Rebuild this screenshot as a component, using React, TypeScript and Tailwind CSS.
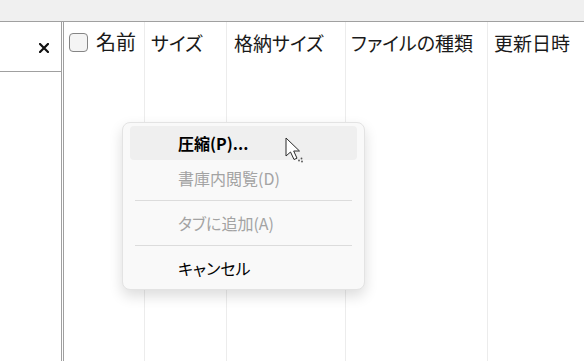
import React from "react";

const font = "font-['Segoe_UI','Noto_Sans_CJK_JP',sans-serif] [font-feature-settings:'palt']";

function Col({ w, children, last }: { w: string; children?: React.ReactNode; last?: boolean }) {
  return (
    <div className={`${w} h-full shrink-0 ${last ? "" : "border-r border-[#ececec]"} flex items-start`}>
      {children}
    </div>
  );
}

export default function App() {
  return (
    <div className={`relative w-[584px] h-[361px] overflow-hidden bg-white flex flex-col ${font}`}>
      <div className="h-[22px] shrink-0 bg-[#f0f0f0] border-b border-[#a0a0a0]" />
      <div className="flex flex-1 min-h-0">
        <div className="w-[61px] shrink-0 flex flex-col">
          <div className="h-[50px] border-b border-[#a0a0a0] flex items-center justify-end pr-[12px] pt-[2px]">
            <svg width="10" height="10" viewBox="0 0 10 10">
              <path d="M1 1 L9 9 M9 1 L1 9" stroke="#111" strokeWidth="2.2" strokeLinecap="square" />
            </svg>
          </div>
        </div>
        <div className="w-[3px] shrink-0 border-l border-r border-[#a0a0a0] bg-white" />
        <div className="flex-1 flex text-[19px] text-[#1a1a1a] leading-none">
          <Col w="w-[81px]">
            <div className="flex items-center pl-[5px] pt-[10px] gap-[8px]">
              <div className="w-[19px] h-[19px] rounded-[4px] border border-[#858585] bg-[#f4f4f4]" />
              <span className="text-[20px]">名前</span>
            </div>
          </Col>
          <Col w="w-[82px]">
            <span className="pl-[6px] pt-[11px]">サイズ</span>
          </Col>
          <Col w="w-[119px]">
            <span className="pl-[7px] pt-[11px]">格納サイズ</span>
          </Col>
          <Col w="w-[142px]">
            <span className="pl-[5px] pt-[11px]">ファイルの種類</span>
          </Col>
          <Col w="flex-1" last>
            <span className="pl-[6px] pt-[11px] whitespace-nowrap">更新日時</span>
          </Col>
        </div>
      </div>

      <div className="absolute left-[122px] top-[122px] w-[243px] rounded-[8px] bg-[#f9f9f9] border border-[#e3e3e3] shadow-[0_6px_14px_rgba(0,0,0,0.14)] px-[7px] py-[3px] text-[16px] leading-none">
        <div className="h-[34px] rounded-[4px] bg-[#efefef] flex items-center pl-[48px] font-bold text-black">圧縮(P)...</div>
        <div className="h-[36px] flex items-center pl-[48px] text-[#a3a3a3]">書庫内閲覧(D)</div>
        <div className="mx-[5px] my-[4px] border-t border-[#dcdcdc]" />
        <div className="h-[36px] flex items-center pl-[48px] text-[#a3a3a3]">タブに追加(A)</div>
        <div className="mx-[5px] my-[4px] border-t border-[#dcdcdc]" />
        <div className="h-[36px] flex items-center pl-[48px] text-black">キャンセル</div>
      </div>

      <svg className="absolute left-[285px] top-[137px]" width="22" height="28" viewBox="0 0 22 28">
        <path d="M1 1 L1 19 L5.5 15 L9 22.5 L12 21.2 L8.7 14 L14.5 14 Z" fill="white" stroke="#2a2a2a" strokeWidth="1" strokeLinejoin="round" />
        <circle cx="14" cy="23.5" r="0.9" fill="#555" />
        <circle cx="16.5" cy="21.5" r="0.9" fill="#555" />
        <circle cx="17" cy="24.5" r="0.9" fill="#555" />
      </svg>
    </div>
  );
}
